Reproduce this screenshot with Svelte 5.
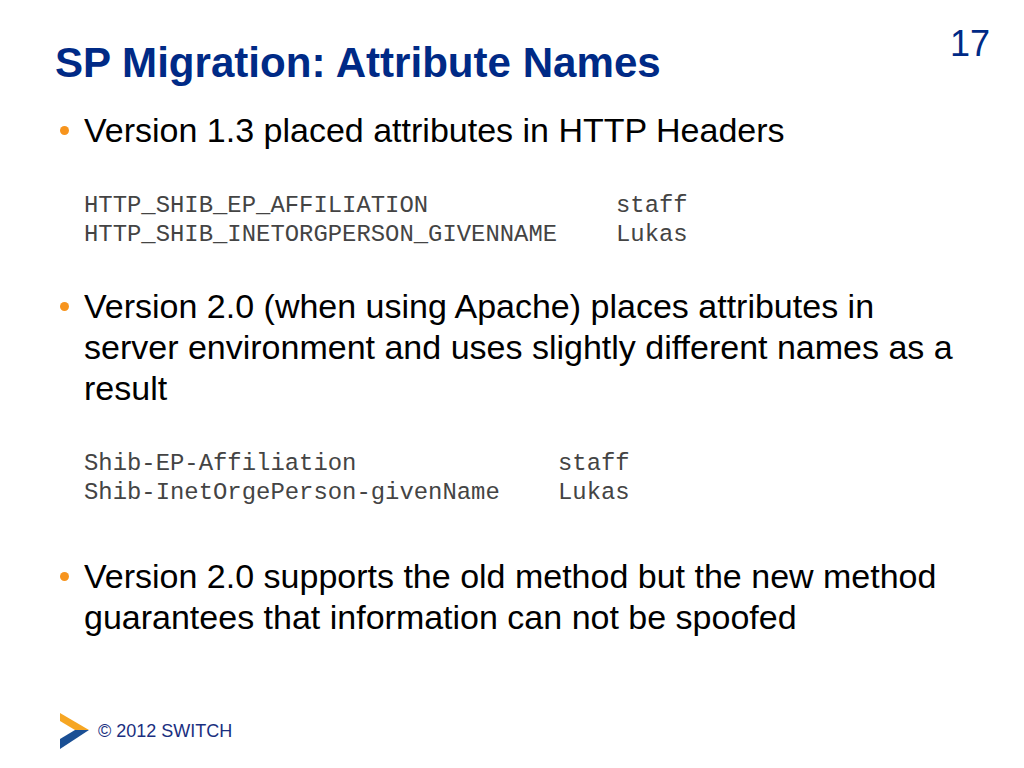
<script>
  const first = [
    ['HTTP_SHIB_EP_AFFILIATION', 'staff'],
    ['HTTP_SHIB_INETORGPERSON_GIVENNAME', 'Lukas']
  ];
  const second = [
    ['Shib-EP-Affiliation', 'staff'],
    ['Shib-InetOrgePerson-givenName', 'Lukas']
  ];
</script>

<div class="slide">
  <header>
    <h1>SP Migration: Attribute Names</h1>
    <span class="num">17</span>
  </header>

  <main>
    <div class="item first">
      <span class="dot"></span>
      <p>Version 1.3 placed attributes in HTTP Headers</p>
    </div>
    <div class="code one">
      {#each first as row}
        <div class="row"><span>{row[0]}</span><span>{row[1]}</span></div>
      {/each}
    </div>

    <div class="item second">
      <span class="dot"></span>
      <p>Version 2.0 (when using Apache) places attributes in server environment and uses slightly different names as a result</p>
    </div>
    <div class="code two">
      {#each second as row}
        <div class="row"><span>{row[0]}</span><span>{row[1]}</span></div>
      {/each}
    </div>

    <div class="item third">
      <span class="dot"></span>
      <p>Version 2.0 supports the old method but the new method guarantees that information can not be spoofed</p>
    </div>
  </main>

  <footer>
    <svg width="30" height="36" viewBox="0 0 30 36">
      <polygon points="0,0 29,17 15,17 0,8" fill="#f6a623" />
      <polygon points="15,17 29,17 0,36 0,26" fill="#1a4f94" />
    </svg>
    <span>© 2012 SWITCH</span>
  </footer>
</div>

<style>
  :global(body) {
    margin: 0;
    background: #fff;
  }

  .slide {
    width: 1024px;
    height: 768px;
    display: flex;
    flex-direction: column;
    font-family: "Liberation Sans", Arial, sans-serif;
    color: #000;
    overflow: hidden;
  }

  header {
    display: flex;
    justify-content: space-between;
    padding: 26px 34px 0 55px;
    height: 62px;
  }

  h1 {
    margin: 15px 0 0;
    font-size: 42.1px;
    line-height: 44px;
    font-weight: 700;
    color: #002a86;
  }

  .num {
    font-size: 36px;
    line-height: 36px;
    color: #002a86;
  }

  main {
    padding: 22px 60px 0 58px;
    flex: 1;
  }

  .item {
    display: flex;
    font-size: 34px;
    line-height: 41px;
  }

  .item p {
    margin: 0;
  }

  .dot {
    width: 9px;
    height: 9px;
    margin: 16px 15px 0 2px;
    flex: none;
    border-radius: 50%;
    background: #f7941d;
  }

  .code {
    margin-left: 26px;
    font-family: "Liberation Mono", "Courier New", monospace;
    font-size: 23.9px;
    line-height: 29px;
    color: #444;
  }

  .row {
    display: flex;
  }

  .one .row span:first-child {
    width: 532px;
  }

  .two .row span:first-child {
    width: 474px;
  }

  .code.one {
    margin-top: 40px;
  }

  .item.second {
    margin-top: 37px;
  }

  .code.two {
    margin-top: 40px;
  }

  .item.third {
    margin-top: 49px;
  }

  footer {
    display: flex;
    align-items: center;
    gap: 8px;
    padding: 0 0 19px 60px;
    font-size: 18px;
    color: #1a2f80;
  }
</style>
